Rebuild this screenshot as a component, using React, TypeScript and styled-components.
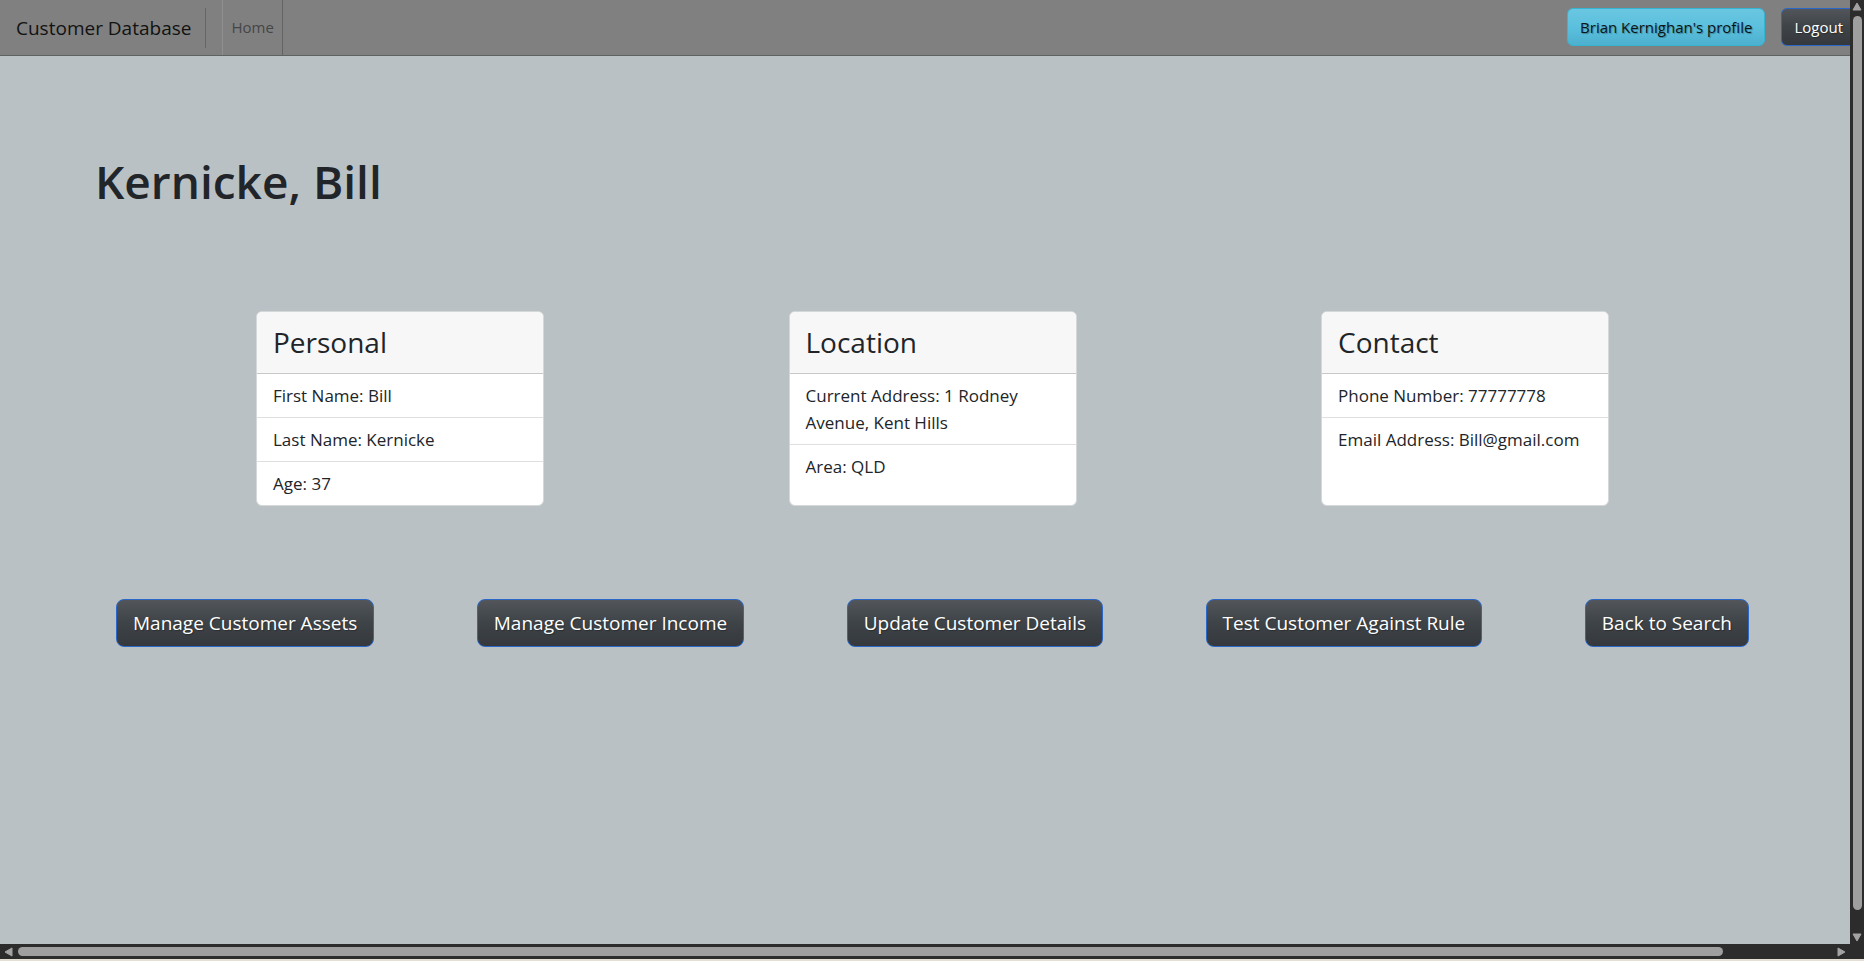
import React from "react";
import styled, { createGlobalStyle, css } from "styled-components";

const GlobalStyle = createGlobalStyle`
  *, *::before, *::after { box-sizing: border-box; }
  body {
    margin: 0;
    background: #b9c1c4;
    color: #212529;
    font-family: "Open Sans", "Noto Sans", sans-serif;
    font-size: 17px;
    line-height: 27px;
  }
`;

const Window = styled.div`
  display: grid;
  grid-template-columns: minmax(0, 1fr) 14px;
  grid-template-rows: minmax(0, 1fr) 15px;
  height: 100vh;
  border-bottom: 2px solid #e6dfd6;
  background: #2c2c2c;
`;

const Page = styled.div`
  overflow: hidden;
  background: #b9c1c4;
`;

const Navbar = styled.nav`
  display: flex;
  align-items: center;
  height: 56px;
  padding-left: 16px;
  background: #808080;
  border-bottom: 1px solid #5f6263;
  white-space: nowrap;
`;

const Brand = styled.a`
  padding-right: 14px;
  border-right: 1px solid #666;
  color: #121212;
  font-size: 19px;
  line-height: 40px;
  text-decoration: none;
`;

const NavItem = styled.a`
  display: flex;
  align-items: center;
  align-self: stretch;
  margin-left: 16px;
  padding: 0 8px;
  border-left: 1px solid #909090;
  border-right: 1px solid #636363;
  color: #464646;
  font-size: 15px;
  text-decoration: none;
`;

const NavActions = styled.div`
  display: flex;
  gap: 16px;
  margin-left: auto;
  margin-right: -6px;
  padding-bottom: 1px;
`;

const Button = styled.button<{ $tone?: "info"; $large?: boolean }>`
  flex: none;
  padding: 0 12px;
  border: 1px solid #2b67c8;
  border-radius: 6px;
  background: linear-gradient(#52565b, #3e4347 50%, #35393d);
  color: #fff;
  font-family: inherit;
  font-size: 15px;
  line-height: 36px;
  text-shadow: 1px 1px 1px rgba(0, 0, 0, 0.3);
  white-space: nowrap;
  cursor: pointer;
  ${(p) =>
    p.$tone === "info" &&
    css`
      border-color: #35b5d2;
      background: linear-gradient(#6ac6e1, #5bc0de 50%, #4cb0ce);
      color: #0b1416;
    `}
  ${(p) =>
    p.$large &&
    css`
      padding: 0 16px;
      border-radius: 8px;
      font-size: 19px;
      line-height: 46px;
    `}
`;

const Title = styled.h1`
  margin: 88px 95px 0;
  font-size: 46px;
  font-weight: 600;
  line-height: 74px;
`;

const Cards = styled.section`
  display: flex;
  justify-content: space-between;
  margin-top: 93px;
  padding: 0 241px 0 256px;
`;

const Card = styled.article`
  width: 288px;
  overflow: hidden;
  border: 1px solid #d5d8d9;
  border-radius: 6px;
  background: #fff;
`;

const CardHeader = styled.h2`
  margin: 0;
  padding: 8px 16px;
  border-bottom: 1px solid #c8c8c8;
  background: #f7f7f7;
  font-size: 28px;
  font-weight: 400;
  line-height: 45px;
`;

const Fields = styled.ul`
  margin: 0;
  padding: 0;
  list-style: none;
`;

const Field = styled.li`
  padding: 8px 16px;
  & + & {
    border-top: 1px solid #dfdfdf;
  }
`;

const Actions = styled.div`
  display: flex;
  justify-content: space-between;
  margin-top: 93px;
  padding: 0 101px 0 116px;
`;

const Scrollbar = styled.div<{ $vertical?: boolean }>`
  display: flex;
  flex-direction: ${(p) => (p.$vertical ? "column" : "row")};
  align-items: center;
  gap: 5px;
  padding: ${(p) => (p.$vertical ? "2px 0" : "0 4px")};
`;

const Track = styled.div<{ $vertical?: boolean }>`
  display: flex;
  flex: 1;
  flex-direction: ${(p) => (p.$vertical ? "column" : "row")};
`;

const Thumb = styled.div<{ $share: number }>`
  flex: 0 0 ${(p) => p.$share}%;
  min-width: 9px;
  min-height: 9px;
  border-radius: 5px;
  background: #9f9f9f;
`;

const arrows = {
  up: "M1 8 L5 1 L9 8 Z",
  down: "M1 1 L5 8 L9 1 Z",
  left: "M8 1 L1 5 L8 9 Z",
  right: "M1 1 L8 5 L1 9 Z",
};

function Arrow({ to }: { to: keyof typeof arrows }) {
  const vertical = to === "up" || to === "down";
  return (
    <svg width={vertical ? 10 : 9} height={vertical ? 9 : 10} aria-hidden="true">
      <path d={arrows[to]} fill="#a3a3a3" stroke="#a3a3a3" strokeLinejoin="round" />
    </svg>
  );
}

const groups = [
  { title: "Personal", fields: ["First Name: Bill", "Last Name: Kernicke", "Age: 37"] },
  { title: "Location", fields: ["Current Address: 1 Rodney Avenue, Kent Hills", "Area: QLD"] },
  { title: "Contact", fields: ["Phone Number: 77777778", "Email Address: Bill@gmail.com"] },
];

const actions = [
  "Manage Customer Assets",
  "Manage Customer Income",
  "Update Customer Details",
  "Test Customer Against Rule",
  "Back to Search",
];

export default function App() {
  return (
    <>
      <GlobalStyle />
      <Window>
        <Page>
          <Navbar>
            <Brand href="#">Customer Database</Brand>
            <NavItem href="#">Home</NavItem>
            <NavActions>
              <Button $tone="info">Brian Kernighan's profile</Button>
              <Button>Logout</Button>
            </NavActions>
          </Navbar>
          <main>
            <Title>Kernicke, Bill</Title>
            <Cards>
              {groups.map((group) => (
                <Card key={group.title}>
                  <CardHeader>{group.title}</CardHeader>
                  <Fields>
                    {group.fields.map((field) => (
                      <Field key={field}>{field}</Field>
                    ))}
                  </Fields>
                </Card>
              ))}
            </Cards>
            <Actions>
              {actions.map((label) => (
                <Button key={label} $large>
                  {label}
                </Button>
              ))}
            </Actions>
          </main>
        </Page>
        <Scrollbar $vertical>
          <Arrow to="up" />
          <Track $vertical>
            <Thumb $share={98} />
          </Track>
          <Arrow to="down" />
        </Scrollbar>
        <Scrollbar>
          <Arrow to="left" />
          <Track>
            <Thumb $share={94} />
          </Track>
          <Arrow to="right" />
        </Scrollbar>
      </Window>
    </>
  );
}
